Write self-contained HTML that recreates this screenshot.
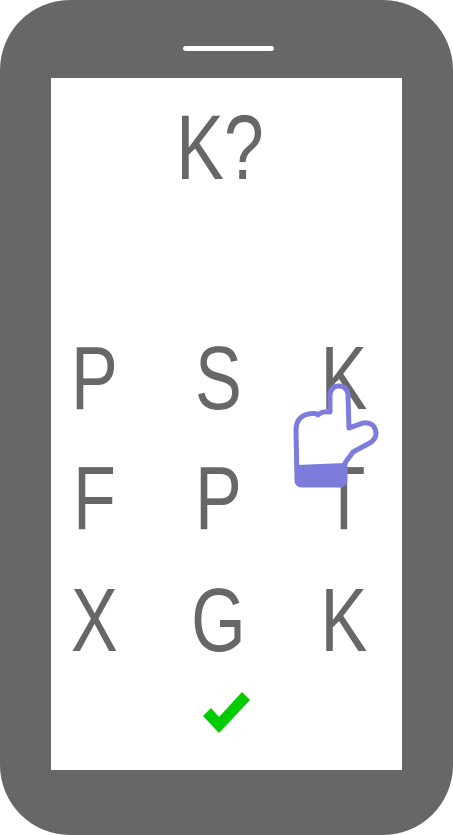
<!DOCTYPE html>
<html><head><meta charset="utf-8"><style>
html,body{margin:0;padding:0;background:#fff;width:453px;height:835px;overflow:hidden}
svg{display:block}
text{font-family:"Liberation Sans",sans-serif;fill:#676767}
</style></head><body>
<svg width="453" height="835" viewBox="0 0 453 835">
<rect x="0" y="0" width="453" height="835" rx="70" fill="#676767"/>
<rect x="51" y="78" width="351" height="692" fill="#fff"/>
<rect x="183" y="46" width="91" height="5" rx="2.5" fill="#fff"/>
<g transform="scale(0.78,1)">
<text x="282" y="179" font-size="92" text-anchor="middle">K?</text>
<g font-size="90" text-anchor="middle">
<text x="121" y="409">P</text><text x="280" y="409">S</text><text x="441" y="409">K</text>
<text x="121" y="529">F</text><text x="280" y="529">P</text><text x="441" y="529">T</text>
<text x="121" y="651">X</text><text x="280" y="651">G</text><text x="441" y="651">K</text>
</g>
</g>
<path d="M330 395 Q331 386 339 386 Q347 386 348 395 L349 428 L363 423 Q375 422 376 433 Q376 440 368 444 L353 452 L345 463 L345 480 Q345 485 340 485 L302 485 Q297 485 297 480 L296 430 Q296 419 305 415 Q315 412 318 415 Q322 411 330 412 Z" fill="#fff" stroke="#7d7bdb" stroke-width="5" stroke-linejoin="round"/>
<path d="M297 465 L345 463 L345 480 Q345 485 340 485 L302 485 Q297 485 297 480 Z" fill="#7d7bdb"/>
<polygon points="203,716 211,708 219,717 242,692 250,700 219,733" fill="#00cc00"/>
</svg>
</body></html>
